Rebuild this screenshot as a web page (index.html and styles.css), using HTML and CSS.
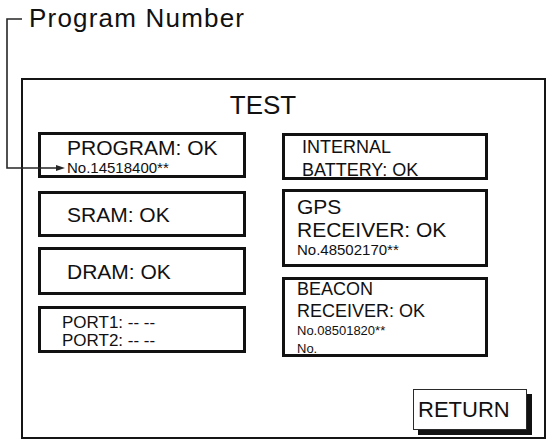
FILE: index.html
```html
<!DOCTYPE html>
<html lang="en">
<head>
    <meta charset="UTF-8">
    <title>TEST</title>
    <link rel="stylesheet" href="styles.css">
</head>
<body>
    <div class="page">
        <div class="callout">Program Number</div>

        <div class="panel">
            <div class="panel-title">TEST</div>
            <div class="results">
                <div class="col col-left">
                    <div class="cell cell-program">
                        <div class="main">PROGRAM: OK</div>
                        <div class="num">No.14518400**</div>
                    </div>
                    <div class="cell cell-single cell-sram">SRAM: OK</div>
                    <div class="cell cell-single cell-dram">DRAM: OK</div>
                    <div class="cell cell-port">
                        <div>PORT1: -- --</div>
                        <div>PORT2: -- --</div>
                    </div>
                </div>
                <div class="col col-right">
                    <div class="cell cell-battery">
                        <div>INTERNAL</div>
                        <div>BATTERY: OK</div>
                    </div>
                    <div class="cell cell-gps">
                        <div class="main">GPS</div>
                        <div class="main">RECEIVER: OK</div>
                        <div class="num">No.48502170**</div>
                    </div>
                    <div class="cell cell-beacon">
                        <div class="beacon-line">BEACON</div>
                        <div class="beacon-line">RECEIVER: OK</div>
                        <div class="beacon-num">No.08501820**</div>
                        <div class="beacon-num">No.</div>
                    </div>
                </div>
            </div>
            <button class="return">RETURN</button>
        </div>

        <!-- leader line from the label to the program number -->
        <svg class="leader" width="551" height="442" viewBox="0 0 551 442">
            <path d="M22 19 H7 V168 H58" fill="none" stroke="#262626" stroke-width="1.6"/>
            <polygon points="65,168 56,165 56,171" fill="#262626"/>
        </svg>
    </div>
</body>
</html>
```

FILE: styles.css
```css
body {
    margin: 0;
    background: #ffffff;
    font-family: "Liberation Sans", Arial, sans-serif;
    color: #111111;
}

.page {
    position: relative;
    width: 551px;
    height: 442px;
}

.callout {
    height: 78px;
    box-sizing: border-box;
    padding: 5px 0 0 29px;
    font-size: 26px;
    line-height: 26px;
    letter-spacing: 1.2px;
}

.panel {
    margin-left: 21px;
    width: 525px;
    height: 361px;
    box-sizing: border-box;
    border: 2px solid #151515;
    padding: 12px 0 0 15px;
    display: flex;
    flex-direction: column;
}

.panel-title {
    width: 450px;
    text-align: center;
    font-size: 26px;
    line-height: 26px;
    margin-bottom: 14px;
}

.results {
    width: 450px;
    display: flex;
    gap: 36px;
}

.col {
    display: flex;
    flex-direction: column;
}

.col-left {
    width: 208px;
}

.col-right {
    width: 206px;
    margin-top: 1px;
}

.cell {
    box-sizing: border-box;
    border: 3px solid #111111;
}

.main {
    font-size: 21px;
    line-height: 21px;
}

.num {
    font-size: 15px;
    line-height: 16px;
    margin-top: 2px;
}

.cell-program {
    height: 46px;
    padding: 2px 0 0 26px;
}

.cell-single {
    display: flex;
    align-items: center;
    padding-left: 26px;
    font-size: 21px;
    line-height: 21px;
}

.cell-sram {
    height: 46px;
    margin-top: 13px;
}

.cell-dram {
    height: 48px;
    margin-top: 10px;
}

.cell-port {
    height: 47px;
    margin-top: 11px;
    padding: 5px 0 0 21px;
    font-size: 17px;
    line-height: 18px;
}

.cell-battery {
    height: 47px;
    padding-left: 17px;
    font-size: 18px;
    line-height: 23px;
}

.cell-gps {
    height: 78px;
    margin-top: 9px;
    padding: 3px 0 0 12px;
}

.cell-gps .main {
    line-height: 23px;
}

.cell-gps .num {
    margin-top: 1px;
}

.cell-beacon {
    height: 80px;
    margin-top: 10px;
    padding-left: 12px;
}

.beacon-line {
    font-size: 18px;
    line-height: 22px;
}

.beacon-line:first-child {
    margin-top: -2px;
}

.beacon-num {
    font-size: 13px;
    line-height: 18px;
}

.return {
    align-self: flex-end;
    margin: auto 17px 7px 0;
    width: 114px;
    height: 41px;
    box-sizing: border-box;
    border: 1px solid #2a2a2a;
    box-shadow: 5px 5px 0 #111111;
    background: #ffffff;
    color: #111111;
    font-family: inherit;
    font-size: 22px;
    text-align: left;
    padding: 0 0 0 4px;
}

.leader {
    position: absolute;
    top: 0;
    left: 0;
    pointer-events: none;
}
```
